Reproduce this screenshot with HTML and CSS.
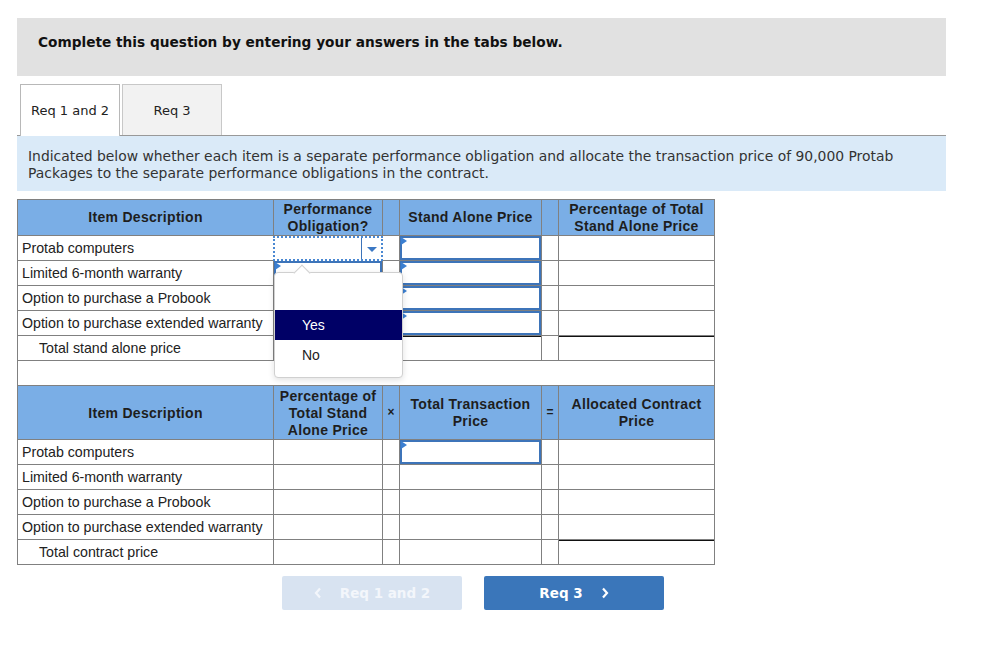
FILE: index.html
```html
<!DOCTYPE html>
<html>
<head>
<meta charset="utf-8">
<link rel="stylesheet" href="styles.css">
</head>
<body>
<div class="page">
  <div class="banner">Complete this question by entering your answers in the tabs below.</div>
  <div class="tabs">
    <div class="tab active">Req 1 and 2</div>
    <div class="tab">Req 3</div>
  </div>
  <div class="info">Indicated below whether each item is a separate performance obligation and allocate the transaction price of 90,000 Protab Packages to the separate performance obligations in the contract.</div>

  <div class="table-wrap">
    <table class="grid">
      <colgroup>
        <col class="c-desc"><col class="c-po"><col class="c-op"><col class="c-sap"><col class="c-op"><col class="c-pct">
      </colgroup>
      <tr class="head1">
        <th>Item Description</th>
        <th>Performance Obligation?</th>
        <th></th>
        <th>Stand Alone Price</th>
        <th></th>
        <th>Percentage of Total Stand Alone Price</th>
      </tr>
      <tr>
        <td class="desc">Protab computers</td>
        <td class="cell-in"><div class="select-focus"><span class="sel-val"></span><span class="sel-btn"><span class="caret"></span></span></div></td>
        <td></td>
        <td class="cell-in"><div class="inbox"><span class="flag"></span></div></td>
        <td></td>
        <td></td>
      </tr>
      <tr>
        <td class="desc">Limited 6-month warranty</td>
        <td class="cell-in"><div class="inbox"><span class="flag"></span></div></td>
        <td></td>
        <td class="cell-in"><div class="inbox"><span class="flag"></span></div></td>
        <td></td>
        <td></td>
      </tr>
      <tr>
        <td class="desc">Option to purchase a Probook</td>
        <td class="cell-in"><div class="inbox"><span class="flag"></span></div></td>
        <td></td>
        <td class="cell-in"><div class="inbox"><span class="flag"></span></div></td>
        <td></td>
        <td></td>
      </tr>
      <tr>
        <td class="desc">Option to purchase extended warranty</td>
        <td class="cell-in"><div class="inbox"><span class="flag"></span></div></td>
        <td></td>
        <td class="cell-in"><div class="inbox"><span class="flag"></span></div></td>
        <td></td>
        <td></td>
      </tr>
      <tr>
        <td class="desc total">Total stand alone price</td>
        <td></td>
        <td></td>
        <td class="sum"></td>
        <td></td>
        <td class="sum"></td>
      </tr>
      <tr class="spacer"><td colspan="6"></td></tr>
      <tr class="head2">
        <th>Item Description</th>
        <th>Percentage of Total Stand Alone Price</th>
        <th class="op">&times;</th>
        <th>Total Transaction Price</th>
        <th class="op">=</th>
        <th>Allocated Contract Price</th>
      </tr>
      <tr>
        <td class="desc">Protab computers</td>
        <td></td>
        <td></td>
        <td class="cell-in"><div class="inbox"><span class="flag"></span></div></td>
        <td></td>
        <td></td>
      </tr>
      <tr>
        <td class="desc">Limited 6-month warranty</td>
        <td></td><td></td><td></td><td></td><td></td>
      </tr>
      <tr>
        <td class="desc">Option to purchase a Probook</td>
        <td></td><td></td><td></td><td></td><td></td>
      </tr>
      <tr>
        <td class="desc">Option to purchase extended warranty</td>
        <td></td><td></td><td></td><td></td><td></td>
      </tr>
      <tr>
        <td class="desc total">Total contract price</td>
        <td></td><td></td><td></td><td></td>
        <td class="sum"></td>
      </tr>
    </table>

    <div class="popup">
      <div class="opt blank"></div>
      <div class="opt selected">Yes</div>
      <div class="opt">No</div>
    </div>
  </div>

  <div class="nav">
    <div class="btn prev">
      <svg class="chev" width="8" height="12" viewBox="0 0 8 12"><polyline points="6,1.5 2,6 6,10.5" fill="none" stroke="currentColor" stroke-width="2.2"/></svg>
      <span>Req 1 and 2</span>
    </div>
    <div class="btn next">
      <span>Req 3</span>
      <svg class="chev" width="8" height="12" viewBox="0 0 8 12"><polyline points="2,1.5 6,6 2,10.5" fill="none" stroke="currentColor" stroke-width="2.2"/></svg>
    </div>
  </div>
</div>
</body>
</html>
```

FILE: styles.css
```css
* { box-sizing: border-box; }
html, body { margin: 0; padding: 0; background: #fff; }
body { font-family: "DejaVu Sans", Verdana, sans-serif; color: #222; }

.page { padding: 18px 39px 0 17px; width: 985px; }

.banner {
  background: #e1e1e1;
  height: 58px;
  padding: 15px 21px 0;
  font-weight: bold;
  font-size: 13.7px;
  line-height: 18px;
  color: #111;
}

.tabs {
  display: flex;
  gap: 2px;
  margin-top: 8px;
  padding-left: 3px;
  border-bottom: 1px solid #999;
  height: 52px;
}
.tab {
  width: 100px;
  height: 51px;
  border: 1px solid #c8c8c8;
  border-bottom: none;
  background: #f2f2f2;
  font-size: 13px;
  display: flex;
  align-items: center;
  justify-content: center;
  color: #222;
}
.tab.active { background: #fff; height: 52px; border-color: #b8b8b8; margin-bottom: -1px; }

.info {
  background: #daeaf8;
  height: 55px;
  padding: 12px 11px 0;
  font-size: 13.9px;
  line-height: 17px;
  color: #333;
}

.table-wrap { position: relative; margin-top: 8px; width: 697px; }

.grid {
  border-collapse: collapse;
  table-layout: fixed;
  width: 697px;
  font-family: "Liberation Sans", Arial, sans-serif;
  font-size: 14.2px;
  color: #222;
}
.c-desc { width: 256px; }
.c-po { width: 109px; }
.c-op { width: 17px; }
.c-sap { width: 142px; }
.c-pct { width: 156px; }

.grid th, .grid td { border: 1px solid #808080; padding: 0; }
.grid th {
  background: #7aaee6;
  font-weight: bold;
  font-size: 14px;
  letter-spacing: 0.3px;
  color: #1e1e1e;
  line-height: 17px;
  text-align: center;
}
.head1 th { height: 36px; }
.head2 th { height: 54px; padding: 1px 3px 0; }
.grid th.op { font-size: 12px; letter-spacing: 0; padding: 0; }
.grid td { height: 25px; }
.grid td.desc { padding-left: 4px; white-space: nowrap; }
.grid td.total { padding-left: 21px; }
.grid td.sum { border-top-color: #111; box-shadow: inset 0 1px 0 #111; }
.spacer td { height: 25px; }

.cell-in { position: relative; }
.inbox {
  position: relative;
  height: 24px;
  border: 2px solid #3d74b9;
  background: #fff;
}
.flag {
  position: absolute;
  left: -1px;
  top: -1px;
  width: 0; height: 0;
  border-left: 6px solid #3b7fd1;
  border-top: 4px solid transparent;
  border-bottom: 4px solid transparent;
}
.select-focus {
  height: 25px;
  margin: -1px;
  border: 2px dotted #4a88d2;
  display: flex;
  background: #fff;
}
.sel-val { flex: 1; }
.sel-btn {
  width: 20px;
  border-left: 1px solid #3d74b9;
  display: flex;
  align-items: center;
  justify-content: center;
}
.caret {
  width: 0; height: 0;
  border-left: 5px solid transparent;
  border-right: 5px solid transparent;
  border-top: 5px solid #3b78c4;
  margin-top: 2px;
}

.popup {
  position: absolute;
  left: 257px;
  top: 73px;
  width: 129px;
  height: 106px;
  background: #fff;
  border: 1px solid #d0d0d0;
  border-radius: 4px;
  box-shadow: 0 2px 6px rgba(0,0,0,0.12);
  font-family: "Liberation Sans", Arial, sans-serif;
  font-size: 14px;
  color: #222;
}
.popup::before {
  content: "";
  position: absolute;
  left: 21px;
  top: -6px;
  width: 11px;
  height: 11px;
  background: #fff;
  border-top: 1px solid #d0d0d0;
  border-left: 1px solid #d0d0d0;
  transform: rotate(45deg);
}
.opt {
  position: relative;
  height: 30px;
  padding-left: 27px;
  display: flex;
  align-items: center;
}
.opt.blank { height: 37px; }
.opt.selected { background: #000066; color: #fff; }

.nav {
  display: flex;
  gap: 22px;
  margin-top: 11px;
  padding-left: 265px;
}
.btn {
  width: 180px;
  height: 34px;
  border-radius: 2px;
  display: flex;
  align-items: center;
  justify-content: center;
  gap: 18px;
  font-family: "DejaVu Sans", Verdana, sans-serif;
  font-weight: bold;
  font-size: 13.5px;
  color: #fff;
}
.btn.prev { background: #d8e3f1; color: #f3f6fb; }
.btn.next { background: #3a76ba; }
.chev { display: block; }
```
